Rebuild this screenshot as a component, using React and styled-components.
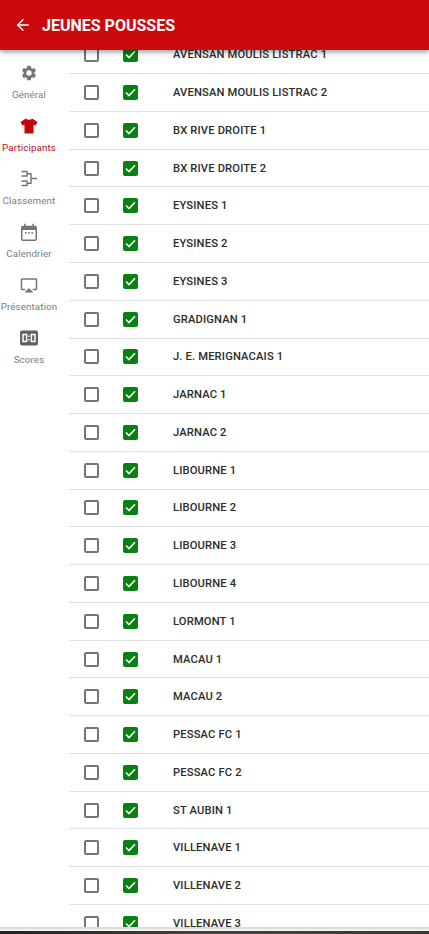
import React from 'react'
import styled, { createGlobalStyle } from 'styled-components'
import { ArrowLeft } from 'lucide-react'

const Global = createGlobalStyle`
  html, body { margin: 0; padding: 0; height: 100%; overflow: hidden; background: #fff; }
  body { font-family: Roboto, "Liberation Sans", sans-serif; }
  * { box-sizing: border-box; }
`

const Screen = styled.div`
  width: 429px;
  height: 934px;
  display: flex;
  flex-direction: column;
  overflow: hidden;
  background: #fff;
`
const Header = styled.header`
  height: 50px;
  flex: none;
  display: flex;
  align-items: center;
  gap: 10px;
  padding-left: 14px;
  background: #cc0a0e;
  color: #fff;
  position: relative;
  z-index: 2;
  box-shadow: 0 2px 5px rgba(0, 0, 0, 0.4);
`
const Title = styled.h1`
  margin: 0;
  font-size: 16px;
  font-weight: 700;
  color: #fff;
`
const Body = styled.div`
  flex: 1;
  display: flex;
  min-height: 0;
`
const Side = styled.nav`
  width: 69px;
  flex: none;
  display: flex;
  flex-direction: column;
  padding: 14px 11px 0 0;
`
const NavItem = styled.div`
  height: 53px;
  display: flex;
  flex-direction: column;
  align-items: center;
  gap: 7px;
  font-size: 9.8px;
  letter-spacing: 0.1px;
  white-space: nowrap;
  color: ${p => (p.$active ? '#b3141c' : '#7d7d7d')};
  svg { display: block; flex: none; }
`
const Main = styled.main`
  flex: 1;
  min-width: 0;
  overflow: hidden;
`
const List = styled.div`
  margin-top: -13.6px;
`
const Row = styled.div`
  height: 37.77px;
  display: flex;
  align-items: center;
  padding-left: 15px;
  border-bottom: 1px solid #e0e0e0;
`
const Box = styled.span`
  width: 15px;
  height: 15px;
  flex: none;
  border-radius: 2px;
  display: flex;
  align-items: center;
  justify-content: center;
  border: ${p => (p.$checked ? 'none' : '2px solid #757575')};
  background: ${p => (p.$checked ? '#0a8012' : '#fff')};
  margin-right: ${p => (p.$checked ? '35px' : '24px')};
`
const Name = styled.span`
  font-size: 11.2px;
  font-weight: 500;
  letter-spacing: 0.15px;
  color: #2b2b2b;
`
const Footer = styled.div`
  height: 7px;
  flex: none;
  position: relative;
  z-index: 2;
  padding-top: 4px;
  background: linear-gradient(180deg, #dcdcdc 0 2px, #f3f3f3 2px 4px);
`
const FooterBar = styled.div`
  height: 3px;
  background: linear-gradient(90deg, #232323, #4a4238 50%, #3f352b);
`

const Gear = () => (
  <svg width="18" height="18" viewBox="0 0 24 24" fill="#757575">
    <path d="M19.14 12.94c.04-.3.06-.61.06-.94s-.02-.64-.07-.94l2.03-1.58a.49.49 0 0 0 .12-.61l-1.92-3.32a.49.49 0 0 0-.59-.22l-2.39.96a7 7 0 0 0-1.62-.94l-.36-2.54a.48.48 0 0 0-.48-.41h-3.84a.48.48 0 0 0-.47.41l-.36 2.54c-.59.24-1.13.57-1.62.94l-2.39-.96a.49.49 0 0 0-.59.22L2.74 8.87a.48.48 0 0 0 .12.61l2.03 1.58c-.05.3-.09.63-.09.94s.02.64.07.94l-2.03 1.58a.49.49 0 0 0-.12.61l1.92 3.32c.12.22.37.29.59.22l2.39-.96c.5.38 1.03.7 1.62.94l.36 2.54c.05.24.24.41.48.41h3.84c.24 0 .44-.17.47-.41l.36-2.54c.59-.24 1.13-.56 1.62-.94l2.39.96c.22.08.47 0 .59-.22l1.92-3.32a.48.48 0 0 0-.12-.61zM12 15.6a3.6 3.6 0 1 1 0-7.2 3.6 3.6 0 0 1 0 7.2z" />
  </svg>
)
const Shirt = () => (
  <svg width="18" height="18" viewBox="0 0 18 18" fill="#c4060c">
    <path d="M6 1.5 C7 3.2 11 3.2 12 1.5 L17.5 5 L15.5 8.5 L13.5 7.7 L13.5 16.5 L4.5 16.5 L4.5 7.7 L2.5 8.5 L0.5 5 Z" />
  </svg>
)
const Bracket = () => (
  <svg width="18" height="18" viewBox="0 0 18 18" fill="none" stroke="#757575" strokeWidth="1.4">
    <path d="M1.5 1.5 H7 V6 H1.5 M1.5 11 H7 V15.5 H1.5" />
    <path d="M7 3.8 H11 V13.2 H7 M11 8.5 H17" />
  </svg>
)
const Calendar = () => (
  <svg width="16" height="18" viewBox="0 0 16 18">
    <path fill="#757575" d="M3 0.8h1.6v2h6.8v-2H13v2h1.2A1.8 1.8 0 0 1 16 4.6v11.6a1.8 1.8 0 0 1-1.8 1.8H1.8A1.8 1.8 0 0 1 0 16.2V4.6a1.8 1.8 0 0 1 1.8-1.8H3z" />
    <rect x="1.5" y="7" width="13" height="9.5" fill="#fff" />
    <rect x="4" y="9" width="1.6" height="1.6" fill="#757575" />
    <rect x="7.2" y="9" width="1.6" height="1.6" fill="#757575" />
    <rect x="10.4" y="9" width="1.6" height="1.6" fill="#757575" />
  </svg>
)
const Cast = () => (
  <svg width="18" height="18" viewBox="0 0 24 24" fill="#757575">
    <path d="M6 22h12l-6-6zM21 3H3c-1.1 0-2 .9-2 2v12c0 1.1.9 2 2 2h4v-2H3V5h18v12h-4v2h4c1.1 0 2-.9 2-2V5c0-1.1-.9-2-2-2z" />
  </svg>
)
const ScoreIcon = () => (
  <svg width="18" height="18" viewBox="0 0 18 18">
    <rect y="1.5" width="18" height="15" rx="2" fill="#616161" />
    <rect x="3" y="5.5" width="3.6" height="7" fill="none" stroke="#fff" strokeWidth="1.5" />
    <rect x="11.4" y="5.5" width="3.6" height="7" fill="none" stroke="#fff" strokeWidth="1.5" />
    <rect x="8.3" y="6.5" width="1.4" height="1.5" fill="#fff" />
    <rect x="8.3" y="10" width="1.4" height="1.5" fill="#fff" />
  </svg>
)
const Check = () => (
  <svg width="11" height="9" viewBox="0 0 11 9" fill="none" stroke="#fff" strokeWidth="1.6">
    <path d="M1 4.5 L4 7.5 L10 1.2" />
  </svg>
)

const navItems = [
  { label: 'Général', Icon: Gear },
  { label: 'Participants', Icon: Shirt, active: true },
  { label: 'Classement', Icon: Bracket },
  { label: 'Calendrier', Icon: Calendar },
  { label: 'Présentation', Icon: Cast },
  { label: 'Scores', Icon: ScoreIcon },
]

const teams = [
  'AVENSAN MOULIS LISTRAC 1', 'AVENSAN MOULIS LISTRAC 2', 'BX RIVE DROITE 1', 'BX RIVE DROITE 2',
  'EYSINES 1', 'EYSINES 2', 'EYSINES 3', 'GRADIGNAN 1', 'J. E. MERIGNACAIS 1', 'JARNAC 1', 'JARNAC 2',
  'LIBOURNE 1', 'LIBOURNE 2', 'LIBOURNE 3', 'LIBOURNE 4', 'LORMONT 1', 'MACAU 1', 'MACAU 2',
  'PESSAC FC 1', 'PESSAC FC 2', 'ST AUBIN 1', 'VILLENAVE 1', 'VILLENAVE 2', 'VILLENAVE 3',
]

export default function App() {
  return (
    <Screen>
      <Global />
      <Header>
        <ArrowLeft size={18} strokeWidth={2} />
        <Title>JEUNES POUSSES</Title>
      </Header>
      <Body>
        <Side>
          {navItems.map(({ label, Icon, active }) => (
            <NavItem key={label} $active={active}>
              <Icon />
              {label}
            </NavItem>
          ))}
        </Side>
        <Main>
          <List>
            {teams.map(team => (
              <Row key={team}>
                <Box />
                <Box $checked><Check /></Box>
                <Name>{team}</Name>
              </Row>
            ))}
          </List>
        </Main>
      </Body>
      <Footer><FooterBar /></Footer>
    </Screen>
  )
}
